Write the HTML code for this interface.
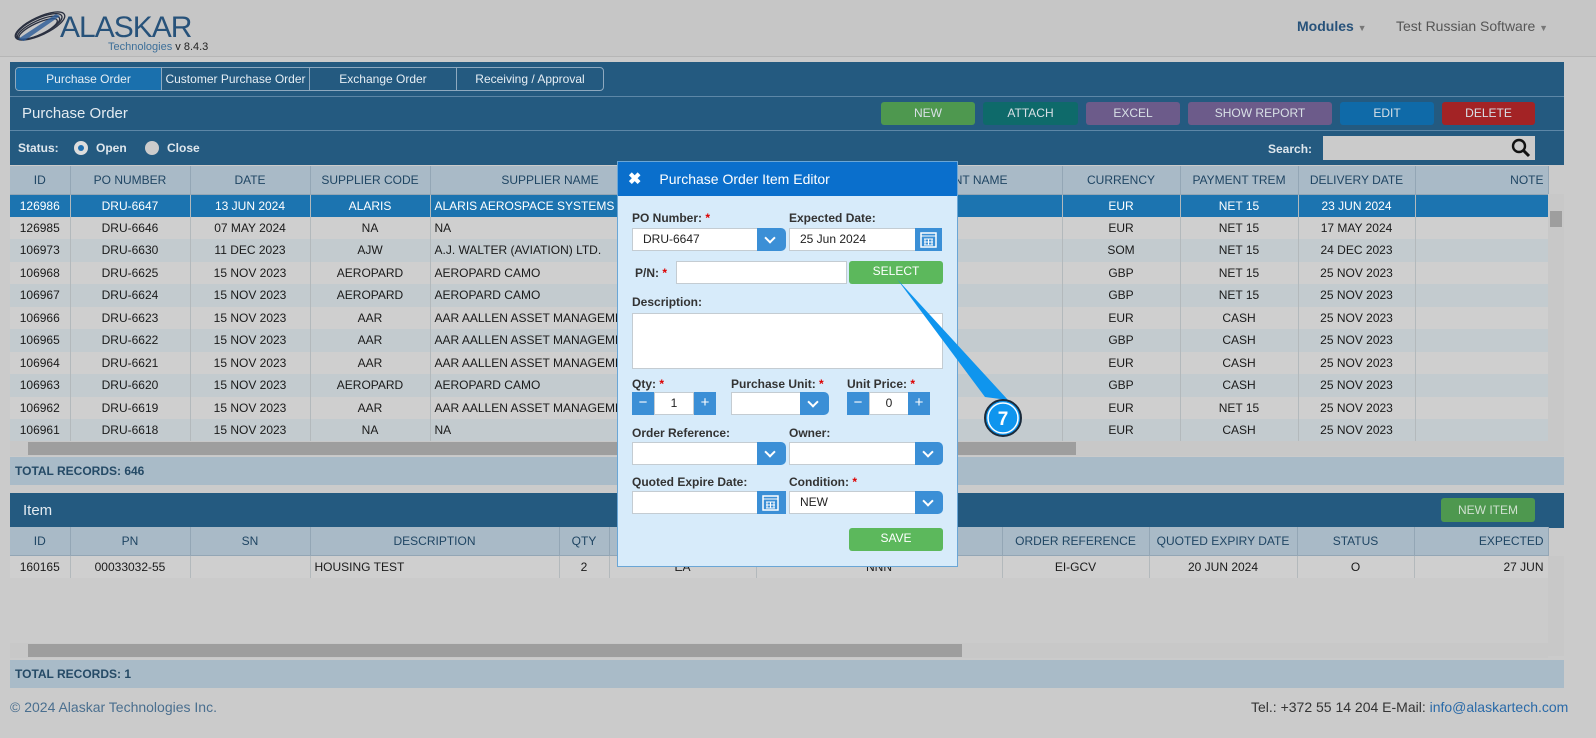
<!DOCTYPE html>
<html><head><meta charset="utf-8"><style>
*{box-sizing:border-box;margin:0;padding:0}
body{width:1596px;height:738px;background:#cbcbcb;font-family:"Liberation Sans",Arial,sans-serif;font-size:12px;color:#1a1a1a;position:relative;overflow:hidden}
.a{position:absolute}
.nav{left:0;top:0;width:1596px;height:57px;background:#c6c6c6;border-bottom:1px solid #b6b6b6}
.panel{background:#245a80}
table{border-collapse:collapse;table-layout:fixed;position:absolute}
td{height:22.5px;text-align:center;border-right:1px solid #b3b9bc;white-space:nowrap;overflow:hidden;font-size:12px;padding:0 4px}
tr.h td{background:#a9bac7;color:#1f4563;height:28px;border-right:1px solid #93a6b5;border-bottom:1px solid #93a6b5}
tr.o td{background:#cfcfcf}
tr.e td{background:#c3cbcf}
tr.s td{background:#1c74b0;color:#fff}
td.l{text-align:left}
.btn{position:absolute;top:102px;height:23px;border-radius:3px;color:#d8e0e6;font-size:12px;text-align:center;line-height:23px}
.tab{position:absolute;top:0;height:22px;line-height:22px;text-align:center;color:#e6eef4;border-right:1px solid #8ea9bf}
.tot{background:#a9bbc8;color:#254a66;font-weight:bold;font-size:12px;line-height:28px;padding-left:5px}
.sb{background:#9e9e9e}
.modal{left:617px;top:161px;width:341px;height:406px;background:#d7ebfa;border:1px solid #6aa6d6}
.mh{left:0;top:0;width:339px;height:34px;background:#0a6fcc;color:#fff;font-size:14px;line-height:34px}
.lb{position:absolute;font-size:12px;font-weight:bold;color:#333}
.lb i{color:#d00;font-style:normal}
.in{position:absolute;background:#fff;border:1px solid #c4ccd2;height:23px;font-size:12px;line-height:21px;padding-left:10px;color:#222}
.dd{position:absolute;background:#3b8fd6;height:23px;border-radius:0 5px 5px 0}
.dd:after{content:"";position:absolute;left:9px;top:6px;width:6px;height:6px;border-right:2px solid #fff;border-bottom:2px solid #fff;transform:rotate(45deg)}
.cal{position:absolute;background:#3b8fd6;height:23px;width:27px}
.gb{position:absolute;background:#5cb85c;color:#fff;border-radius:3px;text-align:center;height:23px;line-height:21px;font-size:12px}
.pm{position:absolute;background:#3b8fd6;color:#fff;width:22px;height:23px;text-align:center;line-height:22px;font-size:15px}
</style></head><body>
<div class="a nav"></div>
<svg class="a" style="left:10px;top:6px" width="60" height="40" viewBox="0 0 60 40">
<g fill="none" stroke="#2a3040" stroke-width="1.3">
<ellipse cx="30" cy="20" rx="27" ry="9" transform="rotate(-25 30 20)"/>
<ellipse cx="29" cy="20" rx="25" ry="8" transform="rotate(-25 30 20)"/>
<ellipse cx="28" cy="21" rx="23" ry="7" transform="rotate(-25 30 20)"/>
<ellipse cx="27" cy="22" rx="21" ry="6" transform="rotate(-25 30 20)"/>
</g><path d="M8 33 L46 8 L50 10 L14 35Z" fill="#2b5a96" opacity=".8"/></svg>
<div class="a" style="left:60px;top:11px;font-size:30px;color:#27527a;letter-spacing:-1px">ALASKAR</div>
<div class="a" style="left:108px;top:41px;font-size:11px;color:#3d6f99">Technologies <span style="color:#222">v 8.4.3</span></div>
<div class="a" style="left:1297px;top:18px;font-size:14px;font-weight:bold;color:#27527a">Modules <span style="font-size:9px;color:#777">▼</span></div>
<div class="a" style="left:1396px;top:18px;font-size:14px;color:#555">Test Russian Software <span style="font-size:9px;color:#777">▼</span></div>

<div class="a panel" style="left:10px;top:62px;width:1554px;height:103px"></div>
<div class="a" style="left:15px;top:67px;width:589px;height:24px;border:1px solid #8ea9bf;border-radius:4px;overflow:hidden">
<div class="tab" style="left:0;width:146px;background:#1a70ad">Purchase Order</div>
<div class="tab" style="left:146px;width:148px">Customer Purchase Order</div>
<div class="tab" style="left:294px;width:147px">Exchange Order</div>
<div class="tab" style="left:441px;width:146px;border:none">Receiving / Approval</div></div>
<div class="a" style="left:10px;top:96px;width:1554px;height:1px;background:#5d87a7"></div>
<div class="a" style="left:22px;top:105px;font-size:15px;color:#e3ebf1">Purchase Order</div>
<div class="btn" style="left:881px;width:94px;background:#4e984f">NEW</div>
<div class="btn" style="left:983px;width:95px;background:#0e6a6a">ATTACH</div>
<div class="btn" style="left:1086px;width:94px;background:#6c5b8a">EXCEL</div>
<div class="btn" style="left:1188px;width:144px;background:#6c5b8a">SHOW REPORT</div>
<div class="btn" style="left:1340px;width:94px;background:#0f6aa8">EDIT</div>
<div class="btn" style="left:1442px;width:93px;background:#a32325">DELETE</div>
<div class="a" style="left:10px;top:130px;width:1554px;height:1px;background:#5d87a7"></div>
<div class="a" style="left:18px;top:141px;font-weight:bold;color:#dfe7ed">Status:</div>
<div class="a" style="left:74px;top:141px;width:14px;height:14px;border-radius:50%;background:#ddd;border:4px solid #ddd"><div style="width:6px;height:6px;border-radius:50%;background:#1f6fb0"></div></div>
<div class="a" style="left:96px;top:141px;font-weight:bold;color:#dfe7ed">Open</div>
<div class="a" style="left:145px;top:141px;width:14px;height:14px;border-radius:50%;background:#ccc"></div>
<div class="a" style="left:167px;top:141px;font-weight:bold;color:#dfe7ed">Close</div>
<div class="a" style="left:1268px;top:142px;font-weight:bold;color:#dfe7ed">Search:</div>
<div class="a" style="left:1323px;top:136px;width:212px;height:24px;background:#cbcbcb"></div>
<svg class="a" style="left:1511px;top:138px" width="20" height="20"><circle cx="8" cy="8" r="6" fill="none" stroke="#111" stroke-width="2.4"/><path d="M12 12l6 6" stroke="#111" stroke-width="3"/></svg>

<table style="left:10px;top:166px;width:1538px">
<colgroup><col width="60"><col width="120"><col width="120"><col width="120"><col width="240"><col width="392"><col width="118"><col width="118"><col width="117"><col width="133"></colgroup>
<tr class="h"><td>ID</td><td>PO NUMBER</td><td>DATE</td><td>SUPPLIER CODE</td><td>SUPPLIER NAME</td><td style="text-align:right;padding-right:54px">ACCOUNT NAME</td><td>CURRENCY</td><td>PAYMENT TREM</td><td>DELIVERY DATE</td><td style="text-align:right">NOTE</td></tr>
<tr class="s"><td>126986</td><td>DRU-6647</td><td>13 JUN 2024</td><td>ALARIS</td><td class="l">ALARIS AEROSPACE SYSTEMS LTD</td><td></td><td>EUR</td><td>NET 15</td><td>23 JUN 2024</td><td></td></tr>
<tr class="o"><td>126985</td><td>DRU-6646</td><td>07 MAY 2024</td><td>NA</td><td class="l">NA</td><td></td><td>EUR</td><td>NET 15</td><td>17 MAY 2024</td><td></td></tr>
<tr class="e"><td>106973</td><td>DRU-6630</td><td>11 DEC 2023</td><td>AJW</td><td class="l">A.J. WALTER (AVIATION) LTD.</td><td></td><td>SOM</td><td>NET 15</td><td>24 DEC 2023</td><td></td></tr>
<tr class="o"><td>106968</td><td>DRU-6625</td><td>15 NOV 2023</td><td>AEROPARD</td><td class="l">AEROPARD CAMO</td><td></td><td>GBP</td><td>NET 15</td><td>25 NOV 2023</td><td></td></tr>
<tr class="e"><td>106967</td><td>DRU-6624</td><td>15 NOV 2023</td><td>AEROPARD</td><td class="l">AEROPARD CAMO</td><td></td><td>GBP</td><td>NET 15</td><td>25 NOV 2023</td><td></td></tr>
<tr class="o"><td>106966</td><td>DRU-6623</td><td>15 NOV 2023</td><td>AAR</td><td class="l">AAR AALLEN ASSET MANAGEMENT</td><td></td><td>EUR</td><td>CASH</td><td>25 NOV 2023</td><td></td></tr>
<tr class="e"><td>106965</td><td>DRU-6622</td><td>15 NOV 2023</td><td>AAR</td><td class="l">AAR AALLEN ASSET MANAGEMENT</td><td></td><td>GBP</td><td>CASH</td><td>25 NOV 2023</td><td></td></tr>
<tr class="o"><td>106964</td><td>DRU-6621</td><td>15 NOV 2023</td><td>AAR</td><td class="l">AAR AALLEN ASSET MANAGEMENT</td><td></td><td>EUR</td><td>CASH</td><td>25 NOV 2023</td><td></td></tr>
<tr class="e"><td>106963</td><td>DRU-6620</td><td>15 NOV 2023</td><td>AEROPARD</td><td class="l">AEROPARD CAMO</td><td></td><td>GBP</td><td>CASH</td><td>25 NOV 2023</td><td></td></tr>
<tr class="o"><td>106962</td><td>DRU-6619</td><td>15 NOV 2023</td><td>AAR</td><td class="l">AAR AALLEN ASSET MANAGEMENT</td><td></td><td>EUR</td><td>NET 15</td><td>25 NOV 2023</td><td></td></tr>
<tr class="e"><td>106961</td><td>DRU-6618</td><td>15 NOV 2023</td><td>NA</td><td class="l">NA</td><td></td><td>EUR</td><td>CASH</td><td>25 NOV 2023</td><td></td></tr>
</table>
<div class="a" style="left:1548px;top:194px;width:16px;height:262px;background:#c8c8c8"><div class="sb" style="margin:17px 2px;height:16px"></div></div>
<div class="a" style="left:10px;top:441px;width:1538px;height:15px;background:#c8c8c8"><div class="sb a" style="left:18px;top:1px;width:1048px;height:13px"></div></div>
<div class="a tot" style="left:10px;top:457px;width:1554px;height:28px">TOTAL RECORDS: 646</div>

<div class="a panel" style="left:10px;top:493px;width:1554px;height:35px"></div>
<div class="a" style="left:23px;top:502px;font-size:15px;color:#e3ebf1">Item</div>
<div class="a" style="left:1441px;top:498px;width:94px;height:24px;background:#4e984f;color:#cfe0cf;border-radius:3px;text-align:center;line-height:24px">NEW ITEM</div>
<table style="left:10px;top:527px;width:1538px">
<colgroup><col width="60"><col width="120"><col width="120"><col width="249"><col width="50"><col width="147"><col width="246"><col width="147"><col width="148"><col width="117"><col width="134"></colgroup>
<tr class="h"><td>ID</td><td>PN</td><td>SN</td><td>DESCRIPTION</td><td>QTY</td><td></td><td></td><td>ORDER REFERENCE</td><td>QUOTED EXPIRY DATE</td><td>STATUS</td><td style="text-align:right">EXPECTED</td></tr>
<tr class="o"><td>160165</td><td>00033032-55</td><td></td><td class="l">HOUSING TEST</td><td>2</td><td>EA</td><td>NNN</td><td>EI-GCV</td><td>20 JUN 2024</td><td>O</td><td style="text-align:right">27 JUN</td></tr>
</table>
<div class="a" style="left:1548px;top:556px;width:16px;height:100px;background:#c8c8c8"></div>
<div class="a" style="left:10px;top:579px;width:1538px;height:64px;background:#cbcbcb"></div>
<div class="a" style="left:10px;top:643px;width:1538px;height:15px;background:#c8c8c8"><div class="sb a" style="left:18px;top:1px;width:934px;height:13px"></div></div>
<div class="a tot" style="left:10px;top:660px;width:1554px;height:28px">TOTAL RECORDS: 1</div>
<div class="a" style="left:10px;top:699px;font-size:14px;color:#4a6f8f">© 2024 Alaskar Technologies Inc.</div>
<div class="a" style="left:1251px;top:699px;font-size:14px;color:#333">Tel.: +372 55 14 204 E-Mail: <span style="color:#2a6aa8">info@alaskartech.com</span></div>

<div class="a modal">
<div class="a mh"><span style="margin-left:10px;font-weight:bold;font-size:16px">✖</span><span style="margin-left:18px">Purchase Order Item Editor</span></div>
<div class="lb" style="left:14px;top:49px">PO Number: <i>*</i></div>
<div class="in" style="left:14px;top:66px;width:126px">DRU-6647</div><div class="dd" style="left:139px;top:66px;width:29px"></div>
<div class="lb" style="left:171px;top:49px">Expected Date:</div>
<div class="in" style="left:171px;top:66px;width:127px">25 Jun 2024</div><div class="cal" style="left:297px;top:66px"><svg width="27" height="23"><rect x="6" y="5" width="15" height="14" fill="none" stroke="#fff" stroke-width="1.5"/><path d="M6 8h15M9 11h9M9 14h9M9 17h9M10 11v6M13.5 11v6M17 11v6" stroke="#fff"/></svg></div>
<div class="lb" style="left:17px;top:104px">P/N: <i>*</i></div>
<div class="in" style="left:58px;top:99px;width:171px"></div>
<div class="gb" style="left:231px;top:99px;width:94px">SELECT</div>
<div class="lb" style="left:14px;top:133px">Description:</div>
<div class="in" style="left:14px;top:151px;width:311px;height:56px"></div>
<div class="lb" style="left:14px;top:215px">Qty: <i>*</i></div>
<div class="pm" style="left:14px;top:230px">−</div><div class="in" style="left:36px;top:230px;width:40px;text-align:center;padding:0">1</div><div class="pm" style="left:76px;top:230px">+</div>
<div class="lb" style="left:113px;top:215px">Purchase Unit: <i>*</i></div>
<div class="in" style="left:113px;top:230px;width:70px"></div><div class="dd" style="left:182px;top:230px;width:29px"></div>
<div class="lb" style="left:229px;top:215px">Unit Price: <i>*</i></div>
<div class="pm" style="left:229px;top:230px">−</div><div class="in" style="left:251px;top:230px;width:40px;text-align:center;padding:0">0</div><div class="pm" style="left:290px;top:230px">+</div>
<div class="lb" style="left:14px;top:264px">Order Reference:</div>
<div class="in" style="left:14px;top:280px;width:126px"></div><div class="dd" style="left:139px;top:280px;width:29px"></div>
<div class="lb" style="left:171px;top:264px">Owner:</div>
<div class="in" style="left:171px;top:280px;width:127px"></div><div class="dd" style="left:297px;top:280px;width:28px"></div>
<div class="lb" style="left:14px;top:313px">Quoted Expire Date:</div>
<div class="in" style="left:14px;top:329px;width:126px"></div><div class="cal" style="left:139px;top:329px;width:29px"><svg width="27" height="23"><rect x="6" y="5" width="15" height="14" fill="none" stroke="#fff" stroke-width="1.5"/><path d="M6 8h15M9 11h9M9 14h9M9 17h9M10 11v6M13.5 11v6M17 11v6" stroke="#fff"/></svg></div>
<div class="lb" style="left:171px;top:313px">Condition: <i>*</i></div>
<div class="in" style="left:171px;top:329px;width:127px">NEW</div><div class="dd" style="left:297px;top:329px;width:28px"></div>
<div class="gb" style="left:231px;top:366px;width:94px">SAVE</div>
</div>
<svg class="a" style="left:880px;top:270px" width="160" height="170"><path d="M17 9 L105 127 L128 130 Z" fill="#0f95ee"/><circle cx="123" cy="148" r="18" fill="#0f95ee" stroke="#1a2a3a" stroke-width="2"/><circle cx="123" cy="148" r="15" fill="none" stroke="#fff" stroke-width="1.5"/><text x="123" y="155" font-family="Liberation Sans" font-size="19" font-weight="bold" fill="#fff" text-anchor="middle">7</text></svg>
</body></html>
